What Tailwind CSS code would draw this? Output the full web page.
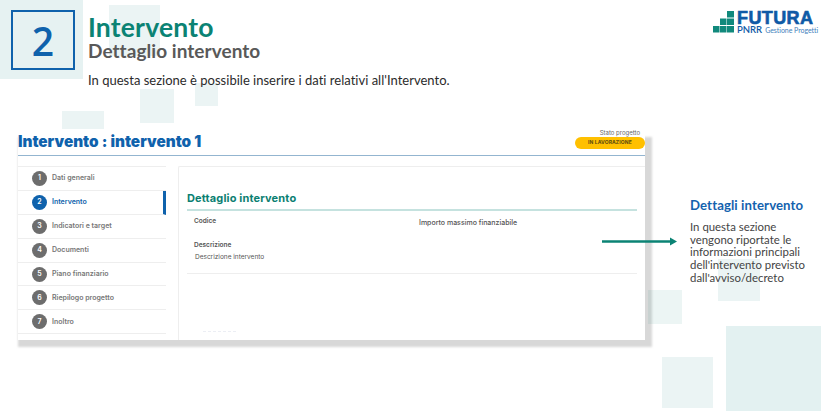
<!DOCTYPE html>
<html lang="it">
<head>
  <meta charset="UTF-8">
  <meta name="viewport" content="width=device-width, initial-scale=1.0">
  <title>Intervento - Dettaglio intervento</title>
  <script src="https://cdn.jsdelivr.net/npm/@tailwindcss/browser@4"></script>
</head>
<body class="bg-white">

  <div class="relative w-[821px] h-[411px] overflow-hidden bg-white font-[Lato,sans-serif]">
    <!-- Decorative squares -->
    <div class="absolute left-0 top-0 w-[83px] h-[79px] bg-[#e6f2f2]"></div>
    <div class="absolute left-[109px] top-[5px] w-[51px] h-[51px] bg-[#ebf4f4]"></div>
    <div class="absolute left-[140px] top-[89px] w-[34px] h-[34px] bg-[#ebf4f4]"></div>
    <div class="absolute left-[195px] top-[83px] w-[23px] h-[23px] bg-[#ebf4f4]"></div>
    <div class="absolute left-[62px] top-[111px] w-[42px] h-[42px] bg-[#ebf4f4]"></div>
    <div class="absolute left-[718px] top-[259px] w-[42px] h-[42px] bg-[#ebf4f4]"></div>
    <div class="absolute left-[662px] top-[357px] w-[51px] h-[51px] bg-[#ebf4f4]"></div>
    <div class="absolute left-[726px] top-[326px] w-[95px] h-[85px] bg-[#e3f1f1]"></div>

    <!-- Slide header -->
    <header class="relative flex pl-[11px] pt-[10px] h-[129px]">
      <div class="w-[64px] h-[60px] border-2 border-[#0f62ac] flex items-center justify-center text-[39px] leading-none font-semibold text-[#0f62ac] font-['Open_Sans',sans-serif]">2</div>
      <div class="ml-[13px] pt-[4px]">
        <h1 class="text-[26.5px] leading-[27px] font-bold text-[#0b8374] tracking-[0.2px]">Intervento</h1>
        <h2 class="text-[19px] leading-[20px] font-bold text-[#595959] tracking-[0.05px]">Dettaglio intervento</h2>
        <p class="mt-[10px] text-[13px] leading-[18px] text-[#2b2b2b] tracking-[0.01px]">In questa sezione è possibile inserire i dati relativi all'Intervento.</p>
      </div>
      <!-- Logo -->
      <div class="absolute left-[713px] top-[11px] flex">
        <svg class="w-[21px] h-[22px]" viewBox="0 0 21 22" fill="#11897c">
          <rect x="14" y="0" width="7" height="6.5"/>
          <rect x="7" y="7.5" width="6.5" height="6.5"/>
          <rect x="14" y="7.5" width="7" height="6.5"/>
          <rect x="0" y="15" width="6.5" height="6.5"/>
          <rect x="7" y="15" width="6.5" height="6.5"/>
          <rect x="14" y="15" width="7" height="6.5"/>
        </svg>
        <div class="ml-[3px] text-[#0f5aa6]">
          <div class="text-[18px] leading-[15px] font-bold font-['Liberation_Sans',sans-serif] tracking-[0.4px] [-webkit-text-stroke:0.6px_#0f5aa6]">FUTURA</div>
          <div class="flex items-baseline leading-[8px]">
            <span class="text-[9.5px] font-semibold">PNRR</span>
            <span class="ml-[3px] text-[7px] text-[#3f7fbc] tracking-[-0.05px]">Gestione Progetti</span>
          </div>
        </div>
      </div>
    </header>

    <!-- Screenshot of the application -->
    <div class="absolute left-[18px] top-[137px] w-[634px] h-[210px] bg-[#d8d8d8] blur-[1px]"></div>
    <section class="relative ml-[18px] w-[627px] h-[211px] bg-white font-[Inter,sans-serif]">
      <div class="flex justify-between items-end h-[27px] border-b border-[#93b5d0]">
        <h3 class="text-[15.3px] leading-[20px] mb-[3px] font-black text-[#0f62ac]">Intervento : intervento 1</h3>
        <div class="flex flex-col items-end mb-[6px]">
          <span class="text-[6px] leading-[8px] mr-[5px] text-[#666]">Stato progetto</span>
          <span class="w-[70px] h-[12px] rounded-full bg-[#ffc000] flex items-center pl-[13px] text-[5px] font-bold text-[#5a4a10] tracking-[0.1px]">IN LAVORAZIONE</span>
        </div>
      </div>

      <div class="flex pt-[10px]">
        <!-- Steps -->
        <ul class="w-[148px] border-t border-[#eeeeee] text-[7px] font-semibold text-[#777]">
          <li class="h-[23.9px] flex items-center pl-[14px] border-b border-[#eeeeee]"><span class="w-[15px] h-[15px] rounded-full bg-[#6d6d6d] text-white flex items-center justify-center mr-[5px]">1</span>Dati generali</li>
          <li class="h-[23.9px] flex items-center pl-[14px] border-b border-r-[3px] border-b-[#eeeeee] border-r-[#0f62ac] text-[#0f62ac]"><span class="w-[15px] h-[15px] rounded-full bg-[#0f62ac] text-white flex items-center justify-center mr-[5px]">2</span>Intervento</li>
          <li class="h-[23.9px] flex items-center pl-[14px] border-b border-[#eeeeee]"><span class="w-[15px] h-[15px] rounded-full bg-[#6d6d6d] text-white flex items-center justify-center mr-[5px]">3</span>Indicatori e target</li>
          <li class="h-[23.9px] flex items-center pl-[14px] border-b border-[#eeeeee]"><span class="w-[15px] h-[15px] rounded-full bg-[#6d6d6d] text-white flex items-center justify-center mr-[5px]">4</span>Documenti</li>
          <li class="h-[23.9px] flex items-center pl-[14px] border-b border-[#eeeeee]"><span class="w-[15px] h-[15px] rounded-full bg-[#6d6d6d] text-white flex items-center justify-center mr-[5px]">5</span>Piano finanziario</li>
          <li class="h-[23.9px] flex items-center pl-[14px] border-b border-[#eeeeee]"><span class="w-[15px] h-[15px] rounded-full bg-[#6d6d6d] text-white flex items-center justify-center mr-[5px]">6</span>Riepilogo progetto</li>
          <li class="h-[23.9px] flex items-center pl-[14px] border-b border-[#eeeeee]"><span class="w-[15px] h-[15px] rounded-full bg-[#6d6d6d] text-white flex items-center justify-center mr-[5px]">7</span>Inoltro</li>
        </ul>

        <!-- Detail panel -->
        <div class="ml-[12px] w-[467px] h-[174px] border-l border-t border-[#eeeeee] rounded-tl-[2px] pl-[8px] pr-[8px] pt-[24px]">
          <h4 class="text-[11px] leading-[14px] font-bold text-[#0b7f72] tracking-[0.15px] pb-[4px] border-b-2 border-[#c5e2df]">Dettaglio intervento</h4>
          <div class="flex pl-[7px] pt-[6px] text-[6.5px] font-semibold text-[#555] leading-[8px]">
            <span class="w-[225px]">Codice</span>
            <span class="mt-[2px] text-[7px] font-medium">Importo massimo finanziabile</span>
          </div>
          <div class="pl-[7px] pt-[14px] pb-[12px] border-b border-[#eeeeee] text-[6.5px] leading-[8px] text-[#555]">
            <div class="font-semibold">Descrizione</div>
            <div class="mt-[4px] ml-[1px]">Descrizione intervento</div>
          </div>
          <div class="mt-[57px] ml-[16px] w-[33px] h-[1px] border-t border-dashed border-[#eceef4]"></div>
        </div>
      </div>
    </section>

    <!-- Overlapping tint on the shadow -->
    <div class="absolute left-[648px] top-[290px] w-[34px] h-[34px] bg-[#0b8374]/8"></div>

    <!-- Arrow -->
    <svg class="absolute left-[602px] top-[236px] w-[76px] h-[10px]" viewBox="0 0 76 10">
      <path d="M0 5.5H68" stroke="#0b8374" stroke-width="2.5"/>
      <path d="M68 1.5L75 5.5L68 9.5Z" fill="#0b8374"/>
    </svg>

    <!-- Side note -->
    <aside class="absolute left-[690px] top-[197px] w-[125px]">
      <h5 class="text-[13.2px] leading-[17px] font-bold text-[#1462ae] tracking-[0.1px]">Dettagli intervento</h5>
      <p class="mt-[7px] text-[11.4px] leading-[12.7px] text-[#444]">In questa sezione vengono riportate le informazioni principali dell'intervento previsto dall'avviso/decreto</p>
    </aside>
  </div>

</body>
</html>
